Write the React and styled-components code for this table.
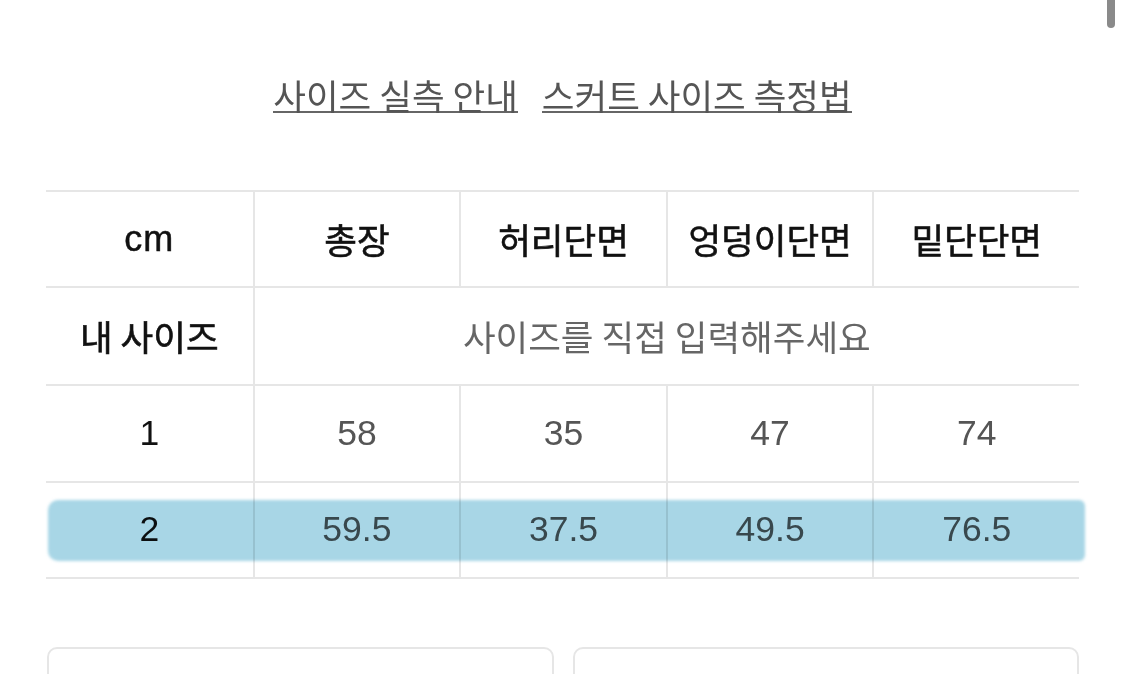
import React from "react";
import styled, { createGlobalStyle } from "styled-components";

const Global = createGlobalStyle`
  html, body { margin: 0; padding: 0; background: #fff; overflow: hidden; }
  body { font-family: "Liberation Sans", "Noto Sans CJK KR", sans-serif; }
`;

const Page = styled.div`
  position: relative;
  width: 1125px;
  height: 674px;
  overflow: hidden;
  background: #fff;
`;

const ScrollThumb = styled.div`
  position: absolute;
  top: -10px;
  right: 10px;
  width: 8px;
  height: 38px;
  border-radius: 4px;
  background: #8a8a8a;
`;

const Links = styled.nav`
  display: flex;
  justify-content: center;
  gap: 24px;
  padding-top: 78px;
`;

const Link = styled.a`
  display: inline-block;
  font-family: "Noto Sans CJK KR", sans-serif;
  font-size: 35.5px;
  line-height: 33px;
  color: #555;
  text-decoration: none;
  border-bottom: 2px solid #666;
`;

const Table = styled.div`
  margin: 77px 46px 0 46px;
  display: flex;
  flex-direction: column;
`;

const Row = styled.div`
  position: relative;
  display: grid;
  grid-template-columns: repeat(5, 1fr);
  height: ${(p) => p.$h || 97}px;
  border-top: 2px solid #e6e6e6;
  ${(p) => (p.$last ? "border-bottom: 2px solid #e6e6e6;" : "")}
  box-sizing: border-box;
`;

const Cell = styled.div`
  display: flex;
  align-items: center;
  justify-content: center;
  grid-column: ${(p) => p.$span || "auto"};
  border-left: ${(p) => (p.$first ? "none" : "2px solid #e6e6e6")};
  color: ${(p) => p.$color || "#111"};
  font-family: ${(p) =>
    p.$kr ? `"Noto Sans CJK KR", sans-serif` : `"Liberation Sans", "Noto Sans CJK KR", sans-serif`};
  font-size: ${(p) => p.$size || 35.5}px;
  font-weight: 400;
  letter-spacing: ${(p) => p.$ls || 0}px;
  -webkit-text-stroke: ${(p) => p.$stroke || "0"};
  line-height: 1;
`;

const Highlight = styled.div`
  position: absolute;
  left: 2px;
  right: -6px;
  top: 17px;
  bottom: 16px;
  background: #a8d6e6;
  border-radius: 10px 6px 6px 10px;
  filter: blur(1.5px);
  mix-blend-mode: multiply;
  pointer-events: none;
`;

const Cards = styled.div`
  display: flex;
  gap: 19px;
  margin: 68px 46px 0 47px;
`;

const Card = styled.div`
  flex: 1;
  height: 120px;
  border: 2px solid #e6e6e6;
  border-radius: 10px;
  box-sizing: border-box;
`;

const headers = ["총장", "허리단면", "엉덩이단면", "밑단단면"];
const rows = [
  { label: "1", values: ["58", "35", "47", "74"], h: 97 },
  { label: "2", values: ["59.5", "37.5", "49.5", "76.5"], highlight: true, h: 98 },
];

export default function App() {
  return (
    <Page>
      <Global />
      <ScrollThumb />
      <Links>
        <Link>사이즈 실측 안내</Link>
        <Link>스커트 사이즈 측정법</Link>
      </Links>
      <Table>
        <Row $h={96}>
          <Cell $first $size={36} $ls={1} $stroke="0.5px currentColor">cm</Cell>
          {headers.map((h) => (
            <Cell key={h} $kr $stroke="0.6px currentColor">{h}</Cell>
          ))}
        </Row>
        <Row $h={98}>
          <Cell $first $kr $stroke="0.6px currentColor">내 사이즈</Cell>
          <Cell $span="2 / 6" $kr $color="#666">사이즈를 직접 입력해주세요</Cell>
        </Row>
        {rows.map((r, i) => (
          <Row key={r.label} $last={i === rows.length - 1} $h={r.h}>
            <Cell $first>{r.label}</Cell>
            {r.values.map((v, j) => (
              <Cell key={j} $color="#555">{v}</Cell>
            ))}
            {r.highlight && <Highlight />}
          </Row>
        ))}
      </Table>
      <Cards>
        <Card />
        <Card />
      </Cards>
    </Page>
  );
}
